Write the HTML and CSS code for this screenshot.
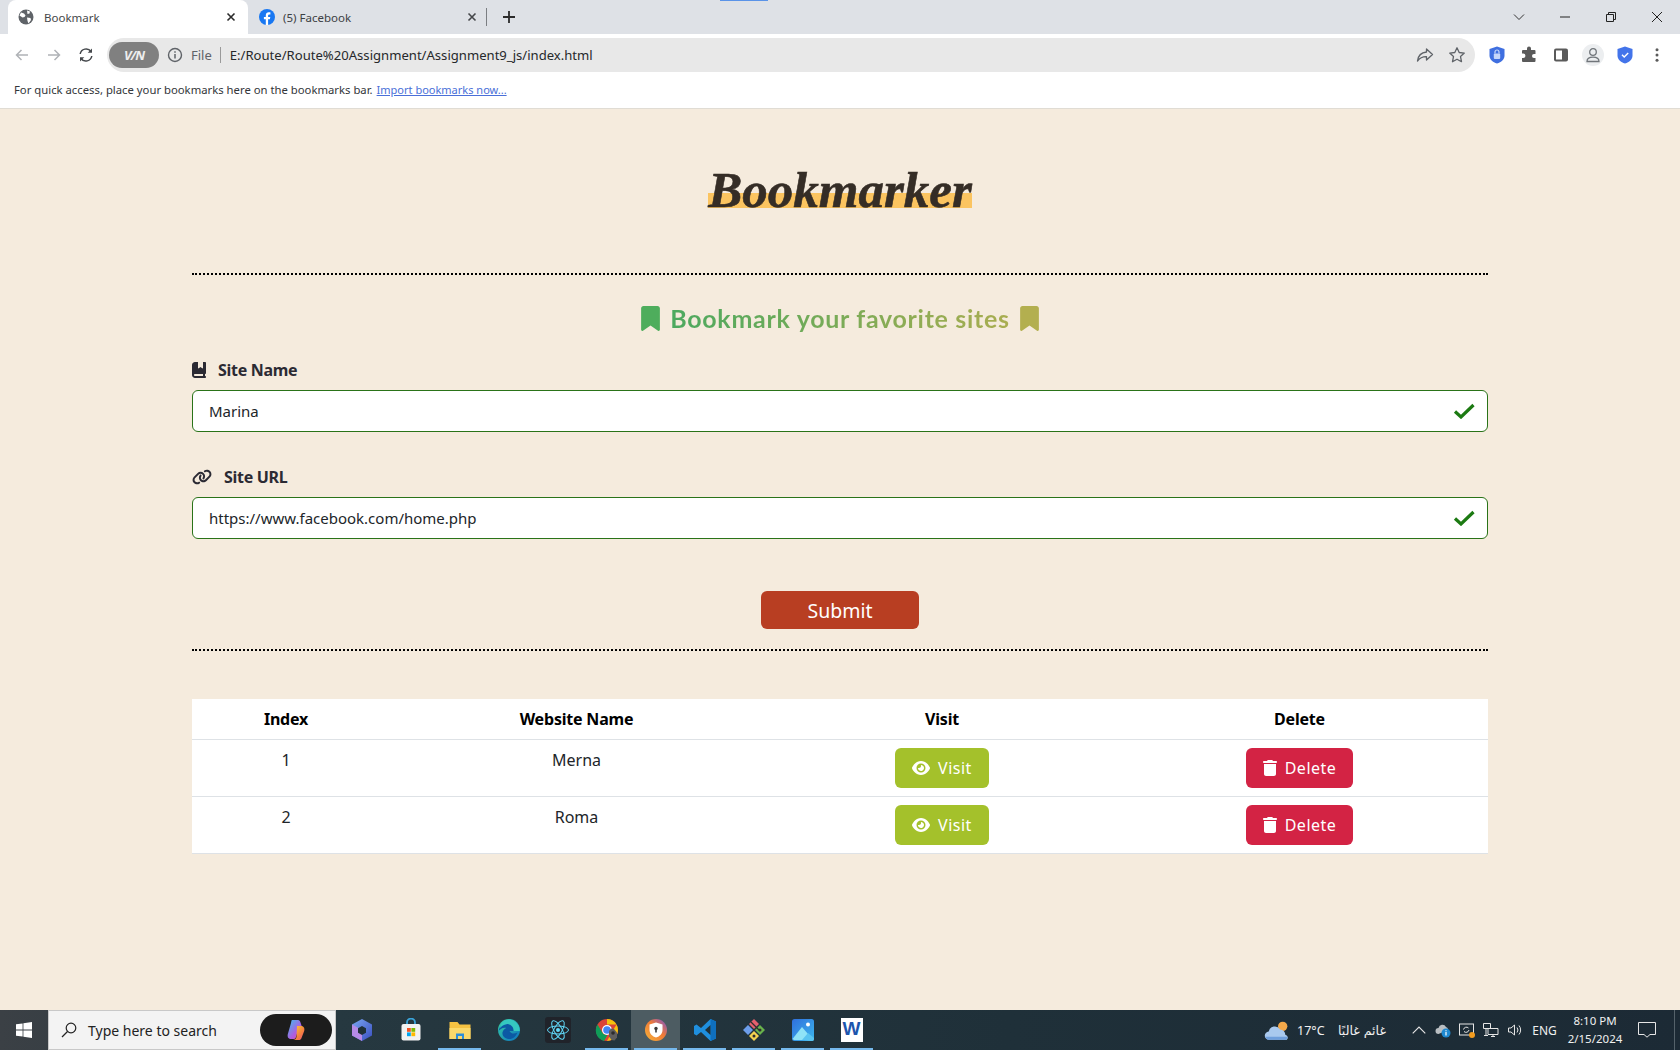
FILE: index.html
```html
<!DOCTYPE html>
<html lang="en">
<head>
    <meta charset="UTF-8">
    <meta name="viewport" content="width=device-width, initial-scale=1.0">
    <title>Bookmark</title>
    <link rel="stylesheet" href="styles.css">
</head>
<body>

    <!-- Browser tabs -->
    <div class="tabstrip">
        <div class="loading-mark"></div>
        <div class="tab tab-active">
            <svg class="favicon" viewBox="0 0 16 16"><circle cx="8" cy="8" r="7.500" fill="#5f6368"/><path d="M3 3.500l3 1 1.500 2-1 1.500-2 .500-3-2zM9 1.500l3 1-.5 2-2 .5zM9 8.500l3.500.5.500 2-2.500 3.500-1-2.500z" fill="#fff"/></svg>
            <span class="tab-title">Bookmark</span>
            <svg class="tab-close" viewBox="0 0 10 10"><path d="M1.500 1.500l7 7M8.500 1.500l-7 7" stroke="#2b2b2b" stroke-width="1.600"/></svg>
        </div>
        <div class="tab tab-other">
            <svg class="favicon" viewBox="0 0 16 16"><circle cx="8" cy="8" r="8" fill="#1877f2"/><path d="M6.800 16V10.300H4.900V8h1.900V6.300c0-2 1.200-3 2.900-3 .9 0 1.700.1 1.700.1v2h-1c-1 0-1.300.6-1.300 1.200V8h2.200l-.4 2.300H9.100V16z" fill="#fff"/></svg>
            <span class="tab-title">(5) Facebook</span>
            <svg class="tab-close" viewBox="0 0 10 10"><path d="M1.500 1.500l7 7M8.500 1.500l-7 7" stroke="#45474a" stroke-width="1.600"/></svg>
        </div>
        <svg class="new-tab" viewBox="0 0 14 14"><path d="M7 1v12M1 7h12" stroke="#2b2b2b" stroke-width="1.800"/></svg>
        <div class="window-controls">
            <div class="win-btn"><svg viewBox="0 0 12 12"><path d="M1 3.500l5 5 5-5" fill="none" stroke="#333" stroke-width="1"/></svg></div>
            <div class="win-btn"><svg viewBox="0 0 12 12"><path d="M1 6h10" stroke="#222" stroke-width="1"/></svg></div>
            <div class="win-btn"><svg viewBox="0 0 12 12"><path d="M1.500 3.500h7v7h-7zM3.500 3.500v-2h7v7h-2" fill="none" stroke="#222" stroke-width="1"/></svg></div>
            <div class="win-btn"><svg viewBox="0 0 12 12"><path d="M1 1l10 10M11 1L1 11" stroke="#222" stroke-width="1"/></svg></div>
        </div>
    </div>

    <!-- Address bar -->
    <div class="toolbar">
        <svg class="nav-icon" viewBox="0 0 16 16"><path d="M14 8H2.500M7.500 3l-5 5 5 5" fill="none" stroke="#b0b3b7" stroke-width="1.500"/></svg>
        <svg class="nav-icon" viewBox="0 0 16 16"><path d="M2 8h11.500M8.500 3l5 5-5 5" fill="none" stroke="#b0b3b7" stroke-width="1.500"/></svg>
        <svg class="nav-icon" viewBox="0 0 16 16"><path d="M2.200 7A6 6 0 0 1 13 4.500M13.800 9A6 6 0 0 1 3 11.500" fill="none" stroke="#45484c" stroke-width="1.500"/><path d="M14 1.500v4.300H9.700zM2 14.500v-4.300h4.300z" fill="#45484c"/></svg>
        <div class="omnibox">
            <div class="vpn-pill">V/N</div>
            <svg class="info-icon" viewBox="0 0 16 16"><circle cx="8" cy="8" r="6.500" fill="none" stroke="#5f6368" stroke-width="1.400"/><path d="M8 7v4.500M8 4.300v1.500" stroke="#5f6368" stroke-width="1.500"/></svg>
            <span class="url-scheme">File</span>
            <span class="url-sep"></span>
            <span class="url-text">E:/Route/Route%20Assignment/Assignment9_js/index.html</span>
            <svg class="omni-icon share-icon" viewBox="0 0 18 18"><path d="M10.500 3l6 5.500-6 5.500v-3.300C6.500 10.500 3.800 12 1.500 15c.6-5 3.500-8.500 9-9z" fill="none" stroke="#5f6368" stroke-width="1.300" stroke-linejoin="round"/></svg>
            <svg class="omni-icon" viewBox="0 0 18 18"><path d="M9 1.800l2.200 4.700 5.100.6-3.800 3.500 1 5.100L9 13.200l-4.500 2.500 1-5.100-3.800-3.500 5.100-.6z" fill="none" stroke="#5f6368" stroke-width="1.300" stroke-linejoin="round"/></svg>
        </div>
        <div class="ext-icons">
            <div class="ext-cell"><svg class="ext-svg" viewBox="0 0 16 18"><path d="M8 .5l7.500 2.500v6.500c0 4-3.200 6.800-7.500 8-4.300-1.200-7.500-4-7.500-8V3z" fill="#3f6fe0"/><rect x="4.800" y="7.500" width="6.400" height="5.500" rx="1" fill="#c6d6fa"/><path d="M6 7.500V6a2 2 0 0 1 4 0v1.500" fill="none" stroke="#c6d6fa" stroke-width="1.200"/></svg></div>
            <div class="ext-cell"><svg class="ext-svg" viewBox="0 0 16 16"><path d="M6 1.500a2 2 0 0 1 4 0V3h3.500a1 1 0 0 1 1 1v3H13a2 2 0 0 0 0 4h1.500v3a1 1 0 0 1-1 1H2a1 1 0 0 1-1-1v-3h1.200a2.200 2.200 0 0 0 0-4.400H1V4a1 1 0 0 1 1-1h4z" fill="#5a5a5a"/></svg></div>
            <div class="ext-cell"><svg class="ext-svg" viewBox="0 0 16 16"><rect x="1" y="1.500" width="14" height="13" rx="2" fill="#5a5a5a"/><rect x="3" y="3.500" width="6" height="9" fill="#fff"/></svg></div>
            <div class="ext-cell"><div class="profile-circle"><svg class="ext-svg" viewBox="0 0 16 16"><circle cx="8" cy="5" r="3.300" fill="none" stroke="#70757a" stroke-width="1.300"/><path d="M2 14.500c0-3 2.500-4.300 6-4.300s6 1.300 6 4.300z" fill="none" stroke="#70757a" stroke-width="1.300"/></svg></div></div>
            <div class="ext-cell"><svg class="ext-svg" viewBox="0 0 16 18"><path d="M8 .5l7.500 2.500v6.500c0 4-3.200 6.800-7.500 8-4.300-1.200-7.500-4-7.500-8V3z" fill="#4374ea"/><path d="M5 8.800l2.200 2.200 4-4" fill="none" stroke="#fff" stroke-width="1.400"/></svg></div>
            <div class="ext-cell"><svg class="ext-svg" viewBox="0 0 16 16"><circle cx="8" cy="2.800" r="1.500" fill="#5a5a5a"/><circle cx="8" cy="8" r="1.500" fill="#5a5a5a"/><circle cx="8" cy="13.200" r="1.500" fill="#5a5a5a"/></svg></div>
        </div>
    </div>

    <!-- Bookmarks bar -->
    <div class="bookmarks-bar">
        <span>For quick access, place your bookmarks here on the bookmarks bar.</span>
        <a href="#" class="import-link">Import bookmarks now...</a>
    </div>

    <!-- Page -->
    <main class="page">
        <div class="container">
            <div class="logo-wrap">
                <h1 class="logo">Bookmarker</h1>
            </div>
            <hr class="dots">

            <h2 class="page-title">
                <svg class="title-icon title-icon-start" viewBox="0 0 384 512"><path d="M0 48V487.700C0 501.100 10.900 512 24.300 512c5 0 9.900-1.500 14-4.400L192 400 345.700 507.600c4.100 2.900 9 4.400 14 4.400c13.400 0 24.300-10.900 24.300-24.300V48c0-26.500-21.500-48-48-48H48C21.500 0 0 21.500 0 48z"/></svg>
                <span class="title-text">Bookmark your favorite sites</span>
                <svg class="title-icon title-icon-end" viewBox="0 0 384 512"><path d="M0 48V487.700C0 501.100 10.900 512 24.300 512c5 0 9.900-1.500 14-4.400L192 400 345.700 507.600c4.100 2.900 9 4.400 14 4.400c13.400 0 24.300-10.900 24.300-24.300V48c0-26.500-21.500-48-48-48H48C21.500 0 0 21.500 0 48z"/></svg>
            </h2>

            <form class="site-form">
                <div class="field">
                    <label class="field-label" for="siteName">
                        <svg class="label-icon" viewBox="0 0 448 512"><path d="M0 96C0 43 43 0 96 0h96V190.700c0 13.400 15.500 20.900 26 12.500L272 160l54 43.200c10.500 8.400 26 .9 26-12.500V0h32 32c17.700 0 32 14.300 32 32V352c0 17.700-14.300 32-32 32v64c17.700 0 32 14.300 32 32s-14.300 32-32 32H384 96c-53 0-96-43-96-96V96zM64 416c0 17.700 14.300 32 32 32H352V384H96c-17.700 0-32 14.300-32 32z"/></svg>
                        Site Name
                    </label>
                    <div class="input-wrap">
                        <input type="text" id="siteName" class="input-field" value="Marina">
                        <svg class="valid-check" viewBox="0 0 22 16"><path d="M2 8.500l6 5.500L20.500 2" fill="none" stroke="#1c7a12" stroke-width="3.200"/></svg>
                    </div>
                </div>
                <div class="field">
                    <label class="field-label label-url" for="siteUrl">
                        <svg class="link-icon" viewBox="0 0 640 512"><path d="M579.800 267.700c56.500-56.500 56.500-148 0-204.500c-50-50-128.800-56.500-186.300-15.400l-1.600 1.100c-14.400 10.300-17.700 30.300-7.400 44.600s30.300 17.700 44.600 7.400l1.600-1.100c32.100-22.900 76-19.300 103.800 8.600c31.500 31.500 31.500 82.500 0 114L422.300 334.800c-31.500 31.500-82.500 31.500-114 0c-27.900-27.900-31.500-71.800-8.600-103.800l1.100-1.600c10.300-14.400 6.900-34.400-7.400-44.600s-34.400-6.900-44.600 7.400l-1.100 1.600C206.500 251.200 213 330 263 380c56.500 56.500 148 56.500 204.500 0L579.800 267.700zM60.200 244.300c-56.500 56.500-56.500 148 0 204.500c50 50 128.800 56.500 186.300 15.400l1.600-1.100c14.400-10.300 17.700-30.300 7.400-44.600s-30.300-17.700-44.600-7.400l-1.600 1.100c-32.100 22.900-76 19.300-103.800-8.600C74 372 74 321 105.500 289.500L217.700 177.200c31.500-31.500 82.500-31.500 114 0c27.900 27.900 31.500 71.800 8.600 103.900l-1.100 1.600c-10.300 14.400-6.900 34.400 7.400 44.600s34.400 6.900 44.600-7.400l1.100-1.600C433.500 260.800 427 182 377 132c-56.500-56.500-148-56.500-204.500 0L60.200 244.300z"/></svg>
                        Site URL
                    </label>
                    <div class="input-wrap">
                        <input type="text" id="siteUrl" class="input-field" value="https://www.facebook.com/home.php">
                        <svg class="valid-check" viewBox="0 0 22 16"><path d="M2 8.500l6 5.500L20.500 2" fill="none" stroke="#1c7a12" stroke-width="3.200"/></svg>
                    </div>
                </div>
                <div class="submit-row">
                    <button type="button" class="submit-btn">Submit</button>
                </div>
            </form>
            <hr class="dots dots-second">

            <table class="sites-table">
                <thead>
                    <tr>
                        <th class="col-index">Index</th>
                        <th class="col-name">Website Name</th>
                        <th class="col-visit">Visit</th>
                        <th>Delete</th>
                    </tr>
                </thead>
                <tbody>
                    <tr>
                        <td>1</td>
                        <td>Merna</td>
                        <td><button type="button" class="btn-visit"><svg class="btn-icon-eye" viewBox="0 0 576 512"><path d="M288 32c-80.800 0-145.500 36.800-192.600 80.600C48.600 156 17.300 208 2.500 243.700c-3.300 7.900-3.300 16.700 0 24.600C17.300 304 48.600 356 95.400 399.400C142.500 443.200 207.200 480 288 480s145.500-36.800 192.600-80.600c46.800-43.500 78.100-95.400 93-131.100c3.300-7.900 3.300-16.700 0-24.600c-14.900-35.700-46.200-87.700-93-131.100C433.500 68.800 368.800 32 288 32zM144 256a144 144 0 1 1 288 0 144 144 0 1 1 -288 0zm144-64c0 35.300-28.700 64-64 64c-7.100 0-13.900-1.200-20.300-3.300c-5.500-1.800-11.900 1.600-11.700 7.400c.3 6.900 1.300 13.800 3.200 20.700c13.700 51.200 66.400 81.600 117.600 67.900s81.600-66.400 67.900-117.600c-11.100-41.500-47.800-69.400-88.600-71.100c-5.800-.2-9.200 6.100-7.400 11.700c2.100 6.400 3.300 13.200 3.300 20.300z"/></svg>Visit</button></td>
                        <td><button type="button" class="btn-delete"><svg class="btn-icon-trash" viewBox="0 0 448 512"><path d="M135.200 17.700C140.600 6.800 151.700 0 163.800 0H284.200c12.100 0 23.200 6.800 28.600 17.700L320 32h96c17.700 0 32 14.300 32 32s-14.300 32-32 32H32C14.300 96 0 81.700 0 64S14.300 32 32 32h96l7.200-14.300zM32 128H416V448c0 35.300-28.700 64-64 64H96c-35.300 0-64-28.700-64-64V128z"/></svg>Delete</button></td>
                    </tr>
                    <tr>
                        <td>2</td>
                        <td>Roma</td>
                        <td><button type="button" class="btn-visit"><svg class="btn-icon-eye" viewBox="0 0 576 512"><path d="M288 32c-80.800 0-145.500 36.800-192.600 80.600C48.600 156 17.300 208 2.500 243.700c-3.300 7.900-3.300 16.700 0 24.600C17.300 304 48.600 356 95.400 399.400C142.500 443.200 207.200 480 288 480s145.500-36.800 192.600-80.600c46.800-43.500 78.100-95.400 93-131.100c3.300-7.900 3.300-16.700 0-24.600c-14.900-35.700-46.200-87.700-93-131.100C433.500 68.800 368.800 32 288 32zM144 256a144 144 0 1 1 288 0 144 144 0 1 1 -288 0zm144-64c0 35.300-28.700 64-64 64c-7.100 0-13.900-1.200-20.300-3.300c-5.500-1.800-11.900 1.600-11.700 7.400c.3 6.900 1.300 13.800 3.200 20.700c13.700 51.200 66.400 81.600 117.600 67.900s81.600-66.400 67.900-117.600c-11.100-41.500-47.800-69.400-88.600-71.100c-5.800-.2-9.200 6.100-7.400 11.700c2.100 6.400 3.300 13.200 3.300 20.300z"/></svg>Visit</button></td>
                        <td><button type="button" class="btn-delete"><svg class="btn-icon-trash" viewBox="0 0 448 512"><path d="M135.200 17.700C140.600 6.800 151.700 0 163.800 0H284.200c12.100 0 23.200 6.800 28.600 17.700L320 32h96c17.700 0 32 14.300 32 32s-14.300 32-32 32H32C14.300 96 0 81.700 0 64S14.300 32 32 32h96l7.200-14.300zM32 128H416V448c0 35.300-28.700 64-64 64H96c-35.300 0-64-28.700-64-64V128z"/></svg>Delete</button></td>
                    </tr>
                </tbody>
            </table>
        </div>
    </main>

    <!-- Windows taskbar -->
    <div class="taskbar">
        <div class="start-btn">
            <svg class="start-logo" viewBox="0 0 16 16"><path d="M0 2.300l6.600-.9v6.200H0zM7.400 1.300L16 0v7.600H7.400zM0 8.400h6.600v6.200L0 13.700zM7.400 8.400H16V16l-8.600-1.300z" fill="#fff"/></svg>
        </div>
        <div class="search-box">
            <svg class="search-icon" viewBox="0 0 16 16"><circle cx="10" cy="6" r="4.800" fill="none" stroke="#222" stroke-width="1.200"/><path d="M6.500 9.500L1 15" stroke="#222" stroke-width="1.300"/></svg>
            <span class="search-text">Type here to search</span>
            <div class="copilot-pill">
                <svg class="app-svg" viewBox="0 0 24 24">
                    <defs><linearGradient id="cpA" x1="0" y1="0" x2="1" y2="1"><stop offset="0" stop-color="#3cc0ee"/><stop offset=".6" stop-color="#b05be0"/><stop offset="1" stop-color="#f0568a"/></linearGradient><linearGradient id="cpB" x1="0" y1="0" x2="1" y2="1"><stop offset="0" stop-color="#f6d13c"/><stop offset=".6" stop-color="#f5803e"/><stop offset="1" stop-color="#e94d7f"/></linearGradient></defs>
                    <path d="M8 2h6c1.500 0 2 1 2.500 2.500L19 12h-5l-2 7c-.4 1.400-1.200 2-2.500 2H7c-3 0-4-2.500-3-5.500L7 5c.3-1.500.5-3 1-3z" fill="url(#cpA)"/>
                    <path d="M13 8h4c3 0 4 2.500 3 5.500l-2.500 6.500c-.5 1.500-1.500 2-2.500 2H9c2 0 3-1 3.500-3z" fill="url(#cpB)"/>
                </svg>
            </div>
        </div>
        <div class="task-apps">
            <div class="task-app">
                <svg class="app-svg" viewBox="0 0 24 24"><defs><linearGradient id="bgA" x1="0" y1="0" x2="1" y2="1"><stop offset="0" stop-color="#7aa6f2"/><stop offset="1" stop-color="#3a4fc0"/></linearGradient></defs><path d="M12 1l10 5.500v11L12 23 2 17.500v-11z" fill="url(#bgA)"/><path d="M2 6.500L12 12v11L2 17.500z" fill="#b68ae8"/><path d="M12 8l4 2.200v4.600L12 17l-4-2.200v-4.600z" fill="#1f3038"/></svg>
            </div>
            <div class="task-app">
                <svg class="app-svg" viewBox="0 0 24 24"><path d="M8 6V4.500a4 4 0 0 1 8 0V6" fill="none" stroke="#3aa3d8" stroke-width="1.800"/><rect x="2.500" y="6" width="19" height="16.500" rx="2" fill="#f2f2f2"/><rect x="8" y="10" width="3.800" height="3.800" fill="#f25022"/><rect x="12.400" y="10" width="3.800" height="3.800" fill="#7fba00"/><rect x="8" y="14.400" width="3.800" height="3.800" fill="#00a4ef"/><rect x="12.400" y="14.400" width="3.800" height="3.800" fill="#ffb900"/></svg>
            </div>
            <div class="task-app task-open">
                <svg class="app-svg" viewBox="0 0 24 24"><path d="M1.500 4h8l2 2.500h11V21h-21z" fill="#f5c242"/><path d="M1.500 10h21v11h-21z" fill="#fbd96b"/><path d="M8 15.500h8V21h-2v-3h-4v3H8z" fill="#2f8fd8"/></svg>
            </div>
            <div class="task-app">
                <svg class="app-svg" viewBox="0 0 24 24"><defs><linearGradient id="edA" x1="0" y1="0" x2="1" y2="1"><stop offset="0" stop-color="#39d3a0"/><stop offset="1" stop-color="#0a6fc2"/></linearGradient></defs><circle cx="12" cy="12" r="11" fill="url(#edA)"/><path d="M1.500 14C2 7 8 3.500 13 4c5 .5 8 4 7.500 9h-8c1 2.500 4.500 3.500 8 1.500-1.500 4-5 7-9 6.500-4-.5-6.500-3.500-6-6.500.5-2.500 2.500-4 4-4.500-3.500-1-6.500 1-8.500 4z" fill="#0c59a4"/><path d="M6 3.500C9 1 14 .8 18 3.500c3 2.200 5 5.500 4.800 9.500h-6.300c.5-4-3-7.500-7-6.800C7 6.600 4.500 8 3 10c.3-2.500 1.200-5 3-6.500z" fill="#35c8c0"/></svg>
            </div>
            <div class="task-app">
                <div class="react-tile">
                    <svg class="app-svg" viewBox="0 0 24 24"><g fill="none" stroke="#61dafb" stroke-width="1"><ellipse cx="12" cy="12" rx="10.500" ry="4"/><ellipse cx="12" cy="12" rx="10.500" ry="4" transform="rotate(60 12 12)"/><ellipse cx="12" cy="12" rx="10.500" ry="4" transform="rotate(120 12 12)"/></g><circle cx="12" cy="12" r="2" fill="#61dafb"/></svg>
                </div>
            </div>
            <div class="task-app task-open">
                <svg class="app-svg" viewBox="0 0 24 24"><circle cx="12" cy="12" r="11" fill="#db4437"/><path d="M12 1a11 11 0 0 1 9.500 5.500H12z" fill="#f4c20d"/><path d="M21.500 6.500A11 11 0 0 1 12 23l5-9z" fill="#f4c20d"/><path d="M2.500 6.500L7 14a5.500 5.500 0 0 0 5.500 3L9 23A11 11 0 0 1 2.500 6.500z" fill="#0f9d58"/><circle cx="12" cy="12" r="5" fill="#fff"/><circle cx="12" cy="12" r="3.800" fill="#4285f4"/><path d="M14 13l2-2.500 3 .5 3 3.500v5l-2.500 3-3-.5-2.500-3.500z" fill="#5e5e5e"/><circle cx="18" cy="15" r="1.800" fill="#2c2c2c"/></svg>
            </div>
            <div class="task-app task-open task-current">
                <svg class="app-svg" viewBox="0 0 24 24"><defs><linearGradient id="avA" x1="1" y1="0" x2="0" y2="1"><stop offset="0" stop-color="#7b52d6"/><stop offset=".45" stop-color="#f07a35"/><stop offset="1" stop-color="#f6b43a"/></linearGradient></defs><circle cx="12" cy="12" r="11" fill="url(#avA)"/><path d="M12 4.500l6.500 2v5.500c0 3.700-2.700 6.400-6.500 7.500-3.800-1.100-6.500-3.800-6.500-7.500V6.500z" fill="#fff"/><circle cx="12" cy="10.500" r="1.700" fill="#3a3a3a"/><path d="M11.200 11h1.600v3.500h-1.600z" fill="#3a3a3a"/></svg>
            </div>
            <div class="task-app task-open">
                <svg class="app-svg" viewBox="0 0 24 24"><path d="M17.500 1L23 3.500v17L17.500 23 8 14l-4.500 3.500L1 16V8l2.500-1.500L8 10z" fill="#1f8fde"/><path d="M17.500 1L23 3.500v17L17.500 23z" fill="#0f6fbd"/><path d="M17.500 7l-5.500 5 5.500 5z" fill="#1f3038"/></svg>
            </div>
            <div class="task-app task-open">
                <svg class="app-svg" viewBox="0 0 24 24"><path d="M12 1l5 5-5 5-5-5z" fill="#e4606d"/><path d="M18 7l5 5-5 5-5-5z" fill="#69b34c"/><path d="M12 13l5 5-5 5-5-5z" fill="#f3d250"/><path d="M6 7l5 5-5 5-5-5z" fill="#6d9eeb"/><circle cx="18" cy="12" r="1.500" fill="#2e2e2e"/><circle cx="12" cy="18" r="1.500" fill="#2e2e2e"/><path d="M9 4l9 9" stroke="#2e2e2e" stroke-width="1.200"/></svg>
            </div>
            <div class="task-app task-open">
                <svg class="app-svg" viewBox="0 0 24 24"><defs><linearGradient id="phA" x1="0" y1="0" x2="1" y2="1"><stop offset="0" stop-color="#2f6fdc"/><stop offset="1" stop-color="#3db8ee"/></linearGradient></defs><rect x="1" y="1" width="22" height="22" rx="2.500" fill="url(#phA)"/><circle cx="17" cy="6.500" r="2" fill="#fff"/><path d="M1.500 21L11 9l6 7-4 6H3z" fill="#8fe3f7"/><path d="M11 22l6-7 6 5v1a2 2 0 0 1-2 2z" fill="#5ac4f0"/></svg>
            </div>
            <div class="task-app task-open">
                <div class="word-tile">W</div>
            </div>
        </div>
        <div class="tray">
            <svg class="weather-icon" viewBox="0 0 26 20"><circle cx="18" cy="6" r="4.500" fill="#f5a94a"/><path d="M5 19a4 4 0 0 1-.5-8 6 6 0 0 1 11-2 5 5 0 0 1 5 5 3 3 0 0 1 1.500 5z" fill="#a9c9ee"/><path d="M5 19a4 4 0 0 1-3.800-3h21.500a3 3 0 0 1-1.700 3z" fill="#6f9fdc"/></svg>
            <span class="tray-temp">17°C</span>
            <span class="tray-weather" lang="ar" dir="rtl">غائم غالبًا</span>
            <div class="tray-cell tray-first"><svg class="tray-svg" viewBox="0 0 14 14"><path d="M1.500 10L7 4.500l5.500 5.500" fill="none" stroke="#e6e6e6" stroke-width="1"/></svg></div>
            <div class="tray-cell"><svg class="tray-svg" viewBox="0 0 16 16"><path d="M3.500 12a3 3 0 0 1 0-6 4 4 0 0 1 7.500-1 3 3 0 0 1 2 3z" fill="#b9bec2"/><circle cx="11" cy="11" r="4.500" fill="#1e88d0"/><path d="M11 10v3.500M11 8.300v1" stroke="#fff" stroke-width="1.200"/></svg></div>
            <div class="tray-cell"><svg class="tray-svg" viewBox="0 0 16 16"><rect x=".5" y="2" width="14" height="11" fill="none" stroke="#e6e6e6" stroke-width="1"/><path d="M4.500 7.500a3 3 0 0 1 5-1.500M10 8a3 3 0 0 1-5 1.500" fill="none" stroke="#e6e6e6" stroke-width="1"/><circle cx="13" cy="13" r="3" fill="#f39c1f"/></svg></div>
            <div class="tray-cell"><svg class="tray-svg" viewBox="0 0 16 16"><path d="M.5 1.500h7v5h-7zM5 6.500h10v6H5zM3 6.500v7M1 13.500h4M10 12.500v2M8 14.500h4" fill="none" stroke="#e6e6e6" stroke-width="1"/></svg></div>
            <div class="tray-cell"><svg class="tray-svg" viewBox="0 0 16 16"><path d="M1.500 6v4h2.500l3.500 3V3L4 6zM10 5.500a4 4 0 0 1 0 5M12 3.500a7 7 0 0 1 0 9" fill="none" stroke="#e6e6e6" stroke-width="1"/></svg></div>
            <span class="tray-lang">ENG</span>
            <div class="tray-clock"><span>8:10 PM</span><span>2/15/2024</span></div>
            <div class="tray-notify"><svg class="tray-note" viewBox="0 0 18 16"><path d="M.5 .5h17v12h-5.500L9 15.200 6 12.500H.5z" fill="none" stroke="#e6e6e6" stroke-width="1"/></svg></div>
            <div class="tray-desktop"></div>
        </div>
    </div>

</body>
</html>
```

FILE: styles.css
```css
* {
    box-sizing: border-box;
}
body {
    font-family: "Noto Sans", Arial, sans-serif;
    background-color: #f5ebdd;
    margin: 0;
    padding: 0;
    height: 1050px;
    overflow: hidden;
    display: flex;
    flex-direction: column;
}

/* browser tabs */
.tabstrip {
    height: 34px;
    background-color: #dee1e6;
    display: flex;
    align-items: center;
    position: relative;
    flex: none;
}
.loading-mark {
    position: absolute;
    left: 720px;
    top: 0;
    width: 48px;
    height: 1px;
    background-color: #5a93e8;
}
.tab {
    height: 34px;
    display: flex;
    align-items: center;
    font-size: 11.500px;
    color: #3c4043;
}
.tab-active {
    width: 240px;
    margin-left: 8px;
    padding: 0 12px 0 10px;
    background-color: #fff;
    border-radius: 8px 8px 0 0;
    color: #45474a;
}
.tab-other {
    width: 239px;
    padding: 0 10px 0 11px;
    position: relative;
}
.tab-other::after {
    content: "";
    position: absolute;
    right: 0;
    top: 8px;
    height: 18px;
    border-right: 1px solid #7b7e82;
}
.favicon {
    width: 16px;
    height: 16px;
    flex: none;
}
.tab-title {
    flex: 1;
    margin-left: 10px;
}
.tab-other .tab-title {
    margin-left: 8px;
}
.tab-close {
    width: 10px;
    height: 10px;
    flex: none;
}
.new-tab {
    width: 14px;
    height: 14px;
    margin-left: 15px;
}
.window-controls {
    margin-left: auto;
    display: flex;
}
.win-btn {
    width: 46px;
    height: 28px;
    display: flex;
    align-items: center;
    justify-content: center;
}
.win-btn svg {
    width: 12px;
    height: 12px;
}

/* address bar */
.toolbar {
    height: 42px;
    background-color: #fff;
    display: flex;
    align-items: center;
    padding-left: 14px;
    flex: none;
}
.nav-icon {
    width: 16px;
    height: 16px;
    margin-right: 16px;
    flex: none;
}
.nav-icon:nth-child(3) {
    margin-right: 13px;
}
.omnibox {
    width: 1368px;
    height: 34px;
    background-color: #e8e8e8;
    border-radius: 17px;
    display: flex;
    align-items: center;
    padding: 0 9px 0 2px;
    flex: none;
}
.vpn-pill {
    width: 50px;
    height: 26px;
    background-color: #808080;
    border-radius: 13px;
    color: #eee;
    font-size: 13px;
    font-weight: 700;
    font-style: italic;
    letter-spacing: -1px;
    display: flex;
    align-items: center;
    justify-content: center;
}
.info-icon {
    width: 16px;
    height: 16px;
    margin-left: 8px;
}
.url-scheme {
    margin-left: 8px;
    font-size: 13px;
    color: #5f6368;
}
.url-sep {
    width: 1px;
    height: 16px;
    margin-left: 8px;
    background-color: #9a9a9a;
}
.url-text {
    margin-left: 9px;
    font-size: 13.100px;
    color: #26282b;
    flex: 1;
}
.omni-icon {
    width: 18px;
    height: 18px;
}
.share-icon {
    margin-right: 14px;
}
.ext-icons {
    display: flex;
    margin-left: 6px;
}
.ext-cell {
    width: 32px;
    height: 32px;
    display: flex;
    align-items: center;
    justify-content: center;
}
.ext-svg {
    width: 16px;
    height: 18px;
}
.profile-circle {
    width: 22px;
    height: 22px;
    background-color: #eceef0;
    border-radius: 50%;
    display: flex;
    align-items: center;
    justify-content: center;
}

/* bookmarks bar */
.bookmarks-bar {
    height: 33px;
    background-color: #fff;
    border-bottom: 1px solid #e0dcd4;
    padding: 0 0 5px 14px;
    font-size: 11.300px;
    color: #33363a;
    display: flex;
    align-items: center;
    flex: none;
}
.import-link {
    margin-left: 4px;
    color: #4a6fd8;
    font-size: 11px;
}

/* page */
.page {
    flex: 1;
    overflow: hidden;
}
.container {
    width: 1296px;
    margin: 0 auto;
}
.logo-wrap {
    margin-top: 43px;
    height: 56px;
    text-align: center;
}
.logo {
    display: inline-block;
    margin: 0;
    height: 56px;
    line-height: 76px;
    font-family: "Liberation Serif", serif;
    font-size: 51px;
    font-weight: 700;
    font-style: italic;
    color: #352d26;
    -webkit-text-stroke: 0.6px #352d26;
    background: linear-gradient(transparent 41px, #fbc460 41px);
}
.dots {
    margin: 65px 0 0;
    border: none;
    border-top: 2px dotted #000;
}
.page-title {
    margin: 25px 0 0;
    height: 36px;
    display: flex;
    align-items: center;
    justify-content: center;
    font-size: 25px;
    font-weight: 700;
}
.title-text {
    margin: 0 10px;
    font-family: "Lato", sans-serif;
    letter-spacing: 0.7px;
    background: linear-gradient(90deg, #4ca95f, #a9ad50);
    -webkit-background-clip: text;
    background-clip: text;
    color: transparent;
}
.title-icon {
    width: 19px;
    height: 25px;
}
.title-icon-start {
    fill: #4ead5c;
}
.title-icon-end {
    fill: #b3af4f;
}
.field {
    margin-top: 22px;
}
.field + .field {
    margin-top: 33px;
}
.field-label {
    height: 24px;
    display: flex;
    align-items: center;
    font-size: 16px;
    font-weight: 700;
    letter-spacing: -0.3px;
    color: #2b2a33;
    margin-bottom: 8px;
}
.label-icon {
    width: 14px;
    height: 16px;
    margin-right: 12px;
    fill: #2b2a33;
}
.link-icon {
    width: 20px;
    height: 16px;
    margin-right: 12px;
    fill: #2b2a33;
}
.input-wrap {
    position: relative;
}
.input-field {
    display: block;
    width: 100%;
    height: 42px;
    padding: 0 50px 0 16px;
    border: 1px solid #2a7318;
    border-radius: 6px;
    background-color: #fff;
    font-family: inherit;
    font-size: 15px;
    color: #212529;
}
.valid-check {
    position: absolute;
    right: 13px;
    top: 13px;
    width: 22px;
    height: 16px;
}
.submit-row {
    margin-top: 52px;
    text-align: center;
}
.submit-btn {
    width: 158px;
    height: 38px;
    border: none;
    border-radius: 6px;
    background-color: #b83e22;
    color: #fff;
    font-family: inherit;
    font-size: 19.500px;
}
.dots-second {
    margin-top: 20px;
}

/* bookmarks table */
.sites-table {
    width: 100%;
    margin-top: 48px;
    border-collapse: collapse;
    table-layout: fixed;
    background-color: #fff;
    text-align: center;
    font-size: 16px;
    color: #212529;
}
.sites-table th,
.sites-table td {
    padding: 8px;
    line-height: 24px;
    border-bottom: 1px solid #dee2e6;
    vertical-align: top;
}
.sites-table th {
    font-weight: 700;
    letter-spacing: -0.2px;
    color: #000;
}
.col-index {
    width: 188px;
}
.col-name {
    width: 393px;
}
.col-visit {
    width: 338px;
}
.btn-visit,
.btn-delete {
    height: 40px;
    border: none;
    border-radius: 6px;
    color: #fff;
    font-family: inherit;
    font-size: 16px;
    letter-spacing: 0.5px;
    vertical-align: top;
    display: inline-flex;
    align-items: center;
    justify-content: center;
}
.btn-visit {
    width: 94px;
    background-color: #a4c12b;
}
.btn-delete {
    width: 107px;
    background-color: #d32344;
}
.btn-icon-eye {
    width: 18px;
    height: 16px;
    margin-right: 8px;
    fill: #fff;
}
.btn-icon-trash {
    width: 14px;
    height: 16px;
    margin-right: 8px;
    fill: #fff;
}

/* windows taskbar */
.taskbar {
    height: 40px;
    background: linear-gradient(90deg, #3b4045 0, #263840 20%, #1f3039 60%, #1c2a35 100%);
    display: flex;
    align-items: stretch;
    flex: none;
    color: #f0f0f0;
}
.start-btn {
    width: 48px;
    display: flex;
    align-items: center;
    justify-content: center;
}
.start-logo {
    width: 16px;
    height: 16px;
}
.search-box {
    width: 288px;
    background-color: #f3f3f3;
    border: 1px solid #c8c8c8;
    display: flex;
    align-items: center;
    padding-left: 12px;
    color: #222;
    font-size: 14px;
}
.search-icon {
    width: 16px;
    height: 16px;
}
.search-text {
    margin-left: 11px;
}
.copilot-pill {
    width: 72px;
    height: 32px;
    margin-left: auto;
    margin-right: 3px;
    background-color: #1c1c1c;
    border-radius: 16px;
    display: flex;
    align-items: center;
    justify-content: center;
}
.task-apps {
    display: flex;
    margin-left: 1px;
}
.task-app {
    width: 49px;
    display: flex;
    align-items: center;
    justify-content: center;
    position: relative;
}
.task-open::after {
    content: "";
    position: absolute;
    left: 3px;
    right: 3px;
    bottom: 0;
    height: 2px;
    background-color: #76b9ed;
}
.task-current {
    background-color: #4d5c62;
}
.app-svg {
    width: 24px;
    height: 24px;
}
.react-tile {
    width: 26px;
    height: 26px;
    background-color: #20232a;
    border-radius: 3px;
    display: flex;
    align-items: center;
    justify-content: center;
}
.word-tile {
    width: 22px;
    height: 24px;
    background-color: #fff;
    color: #1d55ad;
    font-family: "Liberation Sans", sans-serif;
    font-size: 19px;
    font-weight: 700;
    line-height: 22px;
    text-align: center;
}
.tray {
    margin-left: auto;
    display: flex;
    align-items: center;
    font-size: 12.500px;
}
.weather-icon {
    width: 27px;
    height: 21px;
    margin-right: 1px;
}
.tray-temp {
    width: 39px;
    padding-left: 5px;
}
.tray-weather {
    width: 62px;
    text-align: center;
    font-family: "DejaVu Sans", sans-serif;
    font-size: 12.500px;
}
.tray-cell {
    width: 24px;
    display: flex;
    justify-content: center;
}
.tray-first {
    margin-left: 14px;
}
.tray-svg {
    width: 16px;
    height: 16px;
}
.tray-lang {
    width: 35px;
    text-align: center;
    font-size: 12px;
}
.tray-clock {
    width: 66px;
    display: flex;
    flex-direction: column;
    align-items: center;
    font-size: 11.500px;
    line-height: 18px;
}
.tray-notify {
    width: 38px;
    display: flex;
    justify-content: center;
}
.tray-note {
    width: 18px;
    height: 16px;
}
.tray-desktop {
    width: 14px;
    height: 40px;
    margin-left: 0;
    border-right: 5px solid transparent;
    position: relative;
}
.tray-desktop::after {
    content: "";
    position: absolute;
    right: 0;
    top: 0;
    bottom: 0;
    border-right: 1px solid #55626a;
}
```
